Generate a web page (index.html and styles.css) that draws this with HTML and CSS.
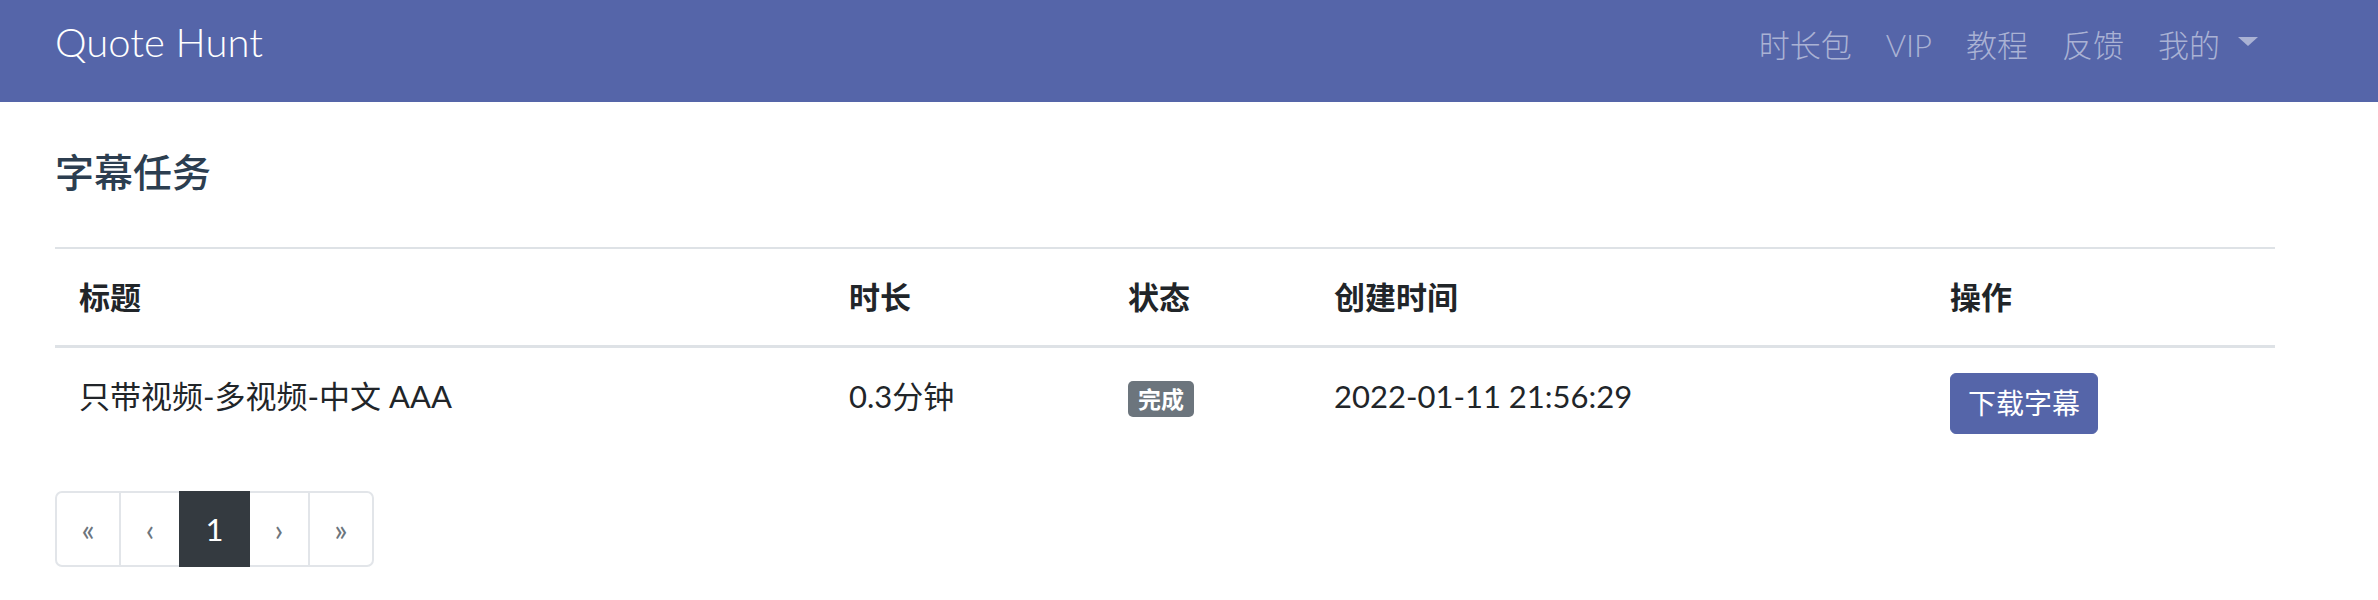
FILE: index.html
```html
<!DOCTYPE html>
<html lang="zh-CN">
<head>
<meta charset="utf-8">
<title>Quote Hunt - 字幕任务</title>
<link rel="stylesheet" href="styles.css">
</head>
<body>
<nav class="navbar">
  <a class="brand" href="#">Quote Hunt</a>
  <ul class="nav">
    <li><a class="nav-link" href="#">时长包</a></li>
    <li><a class="nav-link" href="#">VIP</a></li>
    <li><a class="nav-link" href="#">教程</a></li>
    <li><a class="nav-link" href="#">反馈</a></li>
    <li><a class="nav-link" href="#">我的<span class="caret"></span></a></li>
  </ul>
</nav>
<main class="content">
  <h1 class="page-title">字幕任务</h1>
  <table class="tasks">
    <colgroup>
      <col class="col-title">
      <col class="col-duration">
      <col class="col-status">
      <col class="col-created">
      <col class="col-action">
    </colgroup>
    <thead>
      <tr>
        <th>标题</th>
        <th>时长</th>
        <th>状态</th>
        <th>创建时间</th>
        <th>操作</th>
      </tr>
    </thead>
    <tbody>
      <tr>
        <td>只带视频-多视频-中文 AAA</td>
        <td>0.3分钟</td>
        <td><span class="badge">完成</span></td>
        <td>2022-01-11 21:56:29</td>
        <td><a class="btn" href="#">下载字幕</a></td>
      </tr>
    </tbody>
  </table>
  <ul class="pagination">
    <li><a class="page-link first" href="#">«</a></li>
    <li><a class="page-link" href="#">‹</a></li>
    <li><a class="page-link active" href="#">1</a></li>
    <li><a class="page-link" href="#">›</a></li>
    <li><a class="page-link last" href="#">»</a></li>
  </ul>
</main>
</body>
</html>
```
FILE: styles.css
```css
* {
  box-sizing: border-box;
}

html, body {
  margin: 0;
  padding: 0;
  background: #ffffff;
}

body {
  font-family: Lato, "Noto Sans CJK SC", sans-serif;
  font-size: 31px;
  color: #212529;
}

a {
  text-decoration: none;
}

/* ---------- navbar ---------- */
.navbar {
  height: 102px;
  background: #5565a9;
  display: flex;
  align-items: flex-start;
  justify-content: space-between;
  padding: 12px 103px 0 55px;
}

.brand {
  color: #ffffff;
  font-size: 40px;
  line-height: 60px;
  font-weight: 300;
}

.nav {
  list-style: none;
  margin: 10px 0 0 0;
  padding: 0;
  display: flex;
}

.nav-link {
  display: flex;
  align-items: center;
  color: #aab2d4;
  font-size: 31px;
  line-height: 46px;
  padding: 0 17px;
  font-weight: 300;
}

.caret {
  display: inline-block;
  width: 0;
  height: 0;
  margin-left: 18px;
  margin-top: -8px;
  border-top: 9px solid #aab2d4;
  border-left: 10.5px solid transparent;
  border-right: 10.5px solid transparent;
}

/* ---------- content ---------- */
.content {
  padding: 0 103px 0 55px;
}

.page-title {
  margin: 47px 0 51px 0;
  font-size: 39px;
  line-height: 47px;
  font-weight: 500;
  color: #2c3e50;
}

.tasks {
  width: 2220px;
  border-collapse: collapse;
  table-layout: fixed;
}

.col-title { width: 770px; }
.col-duration { width: 279px; }
.col-status { width: 206px; }
.col-created { width: 616px; }
.col-action { width: 349px; }

.tasks th {
  text-align: left;
  font-weight: 700;
  font-size: 31px;
  line-height: 46px;
  padding: 25px 24px;
  border-top: 2px solid #dee2e6;
  border-bottom: 3px solid #dee2e6;
}

.tasks td {
  vertical-align: top;
  font-size: 31px;
  line-height: 46px;
  padding: 25px 24px 24px 24px;
}

.badge {
  display: inline-block;
  background: #6c757d;
  color: #ffffff;
  font-size: 23px;
  font-weight: 700;
  line-height: 26px;
  padding: 5px 10px;
  border-radius: 5px;
}

.btn {
  display: inline-block;
  background: #5565a9;
  border: 1px solid #5565a9;
  color: #ffffff;
  font-size: 28px;
  line-height: 43px;
  padding: 8px 17px;
  border-radius: 6px;
  vertical-align: top;
}

/* ---------- pagination ---------- */
.pagination {
  list-style: none;
  display: flex;
  margin: 33px 0 0 0;
  padding: 0;
}

.pagination li + li {
  margin-left: -2px;
}

.page-link {
  position: relative;
  display: block;
  border: 2px solid #e2e5e9;
  color: #6c757d;
  font-size: 31px;
  line-height: 72px;
  padding: 0 24.5px;
  background: #ffffff;
}

.page-link.first {
  border-radius: 7px 0 0 7px;
}

.page-link.last {
  border-radius: 0 7px 7px 0;
}

.page-link.active {
  z-index: 1;
  background: #343a40;
  border-color: #343a40;
  color: #ffffff;
}
```
